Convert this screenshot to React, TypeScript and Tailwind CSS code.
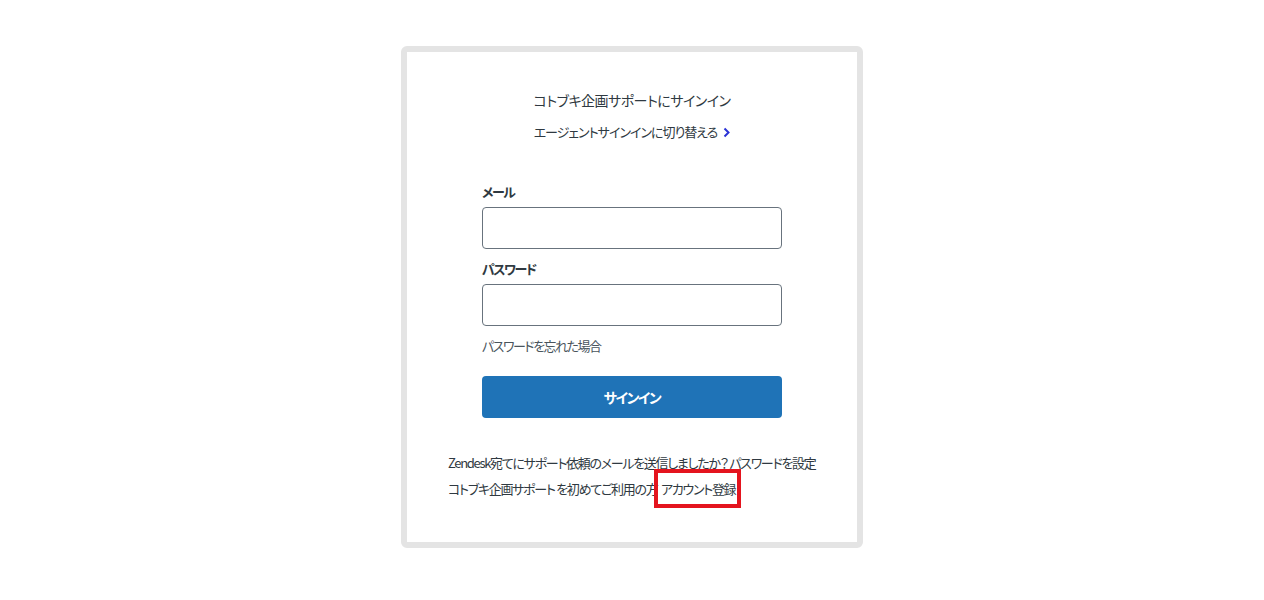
const jp = "font-['Noto_Sans_CJK_JP','Noto_Sans',sans-serif] [font-feature-settings:'palt']";

const Field = ({ label, type, top }: { label: string; type: string; top: string }) => (
  <div className={top}>
    <label className="block text-[13px] leading-[20px] font-bold tracking-[-1.5px] text-[#2f3941]">{label}</label>
    <input
      type={type}
      className="mt-[5px] block w-[300px] h-[42px] rounded-[4px] border border-[#68737d] bg-white px-3 outline-none"
    />
  </div>
);

const App = () => {
  return (
    <div className={`${jp} w-full min-h-[600px] bg-white flex justify-center pt-[46px]`}>
      <div className="w-[462px] h-[502px] rounded-[6px] border-[6px] border-[#e4e4e4] bg-white">
        <div className="flex flex-col items-center pt-[36px]">
          <h1 className="text-[14px] leading-[24px] font-normal tracking-[-0.5px] text-[#2f3941]">
            コトブキ企画サポートにサインイン
          </h1>
          <a href="#" className="mt-[8px] text-[13px] leading-[24px] tracking-[-1px] text-[#2f3941] flex items-center gap-[6px]">
            エージェントサインインに切り替える
            <svg width="7" height="11" viewBox="0 0 7 11" className="mt-[1px]">
              <path d="M1.5 1.5 L5.5 5.5 L1.5 9.5" fill="none" stroke="#2b33d6" strokeWidth="2" />
            </svg>
          </a>
        </div>

        <div className="pl-[75px] mt-[38px]">
          <Field label="メール" type="email" top="" />
          <Field label="パスワード" type="password" top="mt-[10px]" />
          <a href="#" className="block mt-[10px] text-[13px] leading-[20px] tracking-[-1.5px] text-[#49545c]">
            パスワードを忘れた場合
          </a>
          <button className="mt-[20px] w-[300px] h-[42px] rounded-[4px] bg-[#1f73b7] text-white text-[14px] font-bold tracking-[-1.5px]">
            サインイン
          </button>
        </div>

        <div className="pl-[41px] mt-[32px] text-[13px] leading-[26px] tracking-[-1.3px] text-[#2f3941] whitespace-nowrap">
          <p>
            Zendesk宛てにサポート依頼のメールを送信しましたか？ <a href="#">パスワードを設定</a>
          </p>
          <p>
            コトブキ企画サポート を初めてご利用の方{" "}
            <a href="#" className="relative ml-[2px]">
              アカウント登録
              <span className="absolute left-[-7px] right-[-6px] top-[-10px] bottom-[-10px] border-[4px] border-[#e4141e]" />
            </a>
          </p>
        </div>
      </div>
    </div>
  );
};

export default App;
